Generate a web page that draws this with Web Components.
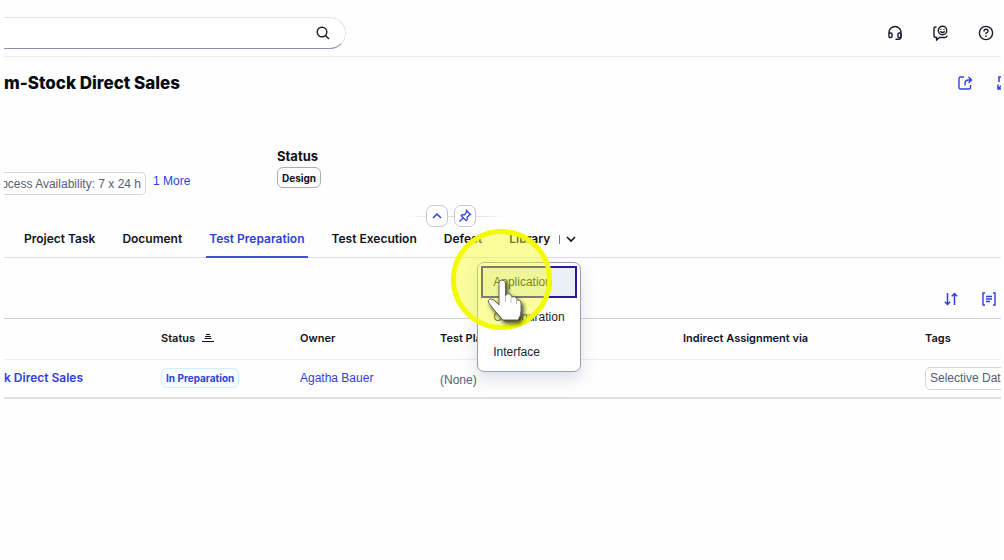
<!DOCTYPE html>
<html lang="en">
<head>
<meta charset="utf-8">
<title>Stock Direct Sales</title>
<style>
html { background: #fff; }
body { margin: 0 3px 0 4px; position: relative; min-height: 100vh; background: #fefefe; color: #131e29; font: 12px/16px "Liberation Sans", sans-serif; font-variant-ligatures: none;
  --link: #2f3fdb; --ink: #10131c; --muted: #556074; --bold: Inter, sans-serif; }
main { overflow-x: clip; }
</style>
</head>
<body>
<shell-bar></shell-bar>
<main>
  <page-header>
    <span slot="title">m-Stock Direct Sales</span>
    <tag-chip slot="facet" cut>ocess Availability: 7 x 24 h</tag-chip>
  </page-header>
  <tab-strip></tab-strip>
  <table-toolbar></table-toolbar>
  <plan-table></plan-table>
</main>
<click-highlight></click-highlight>
<script>
const define = (name, html) => customElements.define(name, class extends HTMLElement {
  constructor() {
    super();
    this.attachShadow({ mode: 'open' }).innerHTML = `<style>
      * { box-sizing: border-box; }
      button { font: inherit; color: inherit; background: none; border: 0; padding: 0; margin: 0; display: flex; align-items: center; justify-content: center; }
      a { color: var(--link); text-decoration: none; }
      svg { display: block; fill: none; stroke: currentColor; flex: none; }
    </style>` + html;
  }
});

define('tag-chip', `<style>
  :host { display: inline-flex; align-items: center; height: 23px; padding: 0 4px; border: 1px solid #d3d5dc; border-radius: 5px; background: #fff; color: var(--muted); white-space: nowrap; box-sizing: border-box; }
  :host([cut]) { border-left: 0; border-radius: 0 5px 5px 0; padding-left: 0; justify-content: flex-end; }
</style><slot></slot>`);

define('shell-bar', `<style>
  :host { display: flex; align-items: center; justify-content: space-between; height: 57px; padding: 10px 7px 0 0; border-bottom: 1px solid #ececf0; box-sizing: border-box; color: #1b1d2c; }
  form { display: flex; align-items: center; width: 342px; height: 32px; border: 1px solid #dfe0ea; border-left: 0; border-bottom-color: #8d91a5; border-radius: 0 16px 16px 0; background: #fff; padding-right: 15px; }
  input { flex: 1; min-width: 0; border: 0; background: none; outline: 0; font: inherit; }
  nav { display: flex; gap: 29px; }
</style>
<form role="search"><input type="text" aria-label="Search"><button type="button" aria-label="Run search">
  <svg width="14" height="14" viewBox="0 0 14 14" stroke-width="1.4"><circle cx="6" cy="6" r="4.8"/><path d="M9.5 9.5 13 13"/></svg></button></form>
<nav>
  <button aria-label="Support"><svg width="16" height="16" viewBox="0 0 16 16" stroke-width="1.4"><path d="M2 9V7.500a6 6 0 0 1 12 0v4.500q0 2.300-2.500 2.300H8.500"/><rect x="2" y="8" width="3" height="4.500" rx="1"/><rect x="11" y="8" width="3" height="4.500" rx="1"/></svg></button>
  <button aria-label="Feedback"><svg width="17" height="16" viewBox="0 0 17 16" stroke-width="1.4"><path d="M4.500 2H3.500Q2 2 2 3.500v7q0 2 2 2h.6V15l3-2.500H13q1.800 0 2.200-1.800"/><circle cx="10.500" cy="5.500" r="4.200"/><path d="M8.300 6.200q2.200 2.600 4.400 0M8.900 4.200v.7M12.100 4.200v.7"/></svg></button>
  <button aria-label="Help"><svg width="16" height="16" viewBox="0 0 16 16" stroke-width="1.4"><circle cx="8" cy="8" r="6.600"/><path d="M6 6.400q0-2.100 2-2.100t2 1.900Q10 7.400 8 8.100v1.200M8 10.500v1.400"/></svg></button>
</nav>`);

define('page-header', `<style>
  :host { display: block; height: 159px; position: relative; }
  header { display: flex; justify-content: space-between; padding: 14px 0 0; height: 90px; }
  h1 { margin: 0; font: 800 17px/24px var(--bold); color: #060a14; white-space: nowrap; }
  .tools { display: flex; gap: 23px; height: 24px; align-items: center; color: var(--link); margin-right: -11px; }
  .facets { display: flex; align-items: flex-start; }
  .more { margin: 26px 0 0 8px; width: 124px; }
  .status h2 { margin: 0; font: 700 13px/18px var(--bold); color: var(--ink); }
  .status span { display: inline-flex; align-items: center; height: 21px; margin-top: 2px; padding: 0 4px; border: 1px solid #a9adb9; border-radius: 6px; font: 700 10px/16px var(--bold); color: var(--ink); }
  slot[name=facet] { display: flex; padding-top: 25px; width: 141px; }
  ::slotted(tag-chip) { width: 142px; flex: none; }
  .pins { position: absolute; left: 404px; top: 148px; width: 96px; padding-left: 18px; display: flex; gap: 6px; color: var(--link); z-index: 1; }
  .pins::before { content: ""; position: absolute; inset: 11px 0 auto; height: 1px; background: linear-gradient(90deg, transparent, #dddde8 30%, #dddde8 70%, transparent); }
  .pins button { position: relative; width: 22px; height: 22px; border: 1px solid #c5c8d9; border-radius: 7px; background: #fff; }
</style>
<header><h1><slot name="title"></slot></h1><div class="tools">
  <button aria-label="Share"><svg width="16" height="16" viewBox="0 0 16 16" stroke-width="1.4"><path d="M7 2H3.500Q2 2 2 3.500v9Q2 14 3.500 14H12q1.500 0 1.500-1.500V10M8 10.500V8.500Q8 5 11.500 5H14M11.500 2l3 3-3 3"/></svg></button>
  <button aria-label="Full screen"><svg width="16" height="16" viewBox="0 0 16 16" stroke-width="1.500"><path d="M3 7V2h5M2 9.500V14h5M2 14l5-5M14 8V2H9"/></svg></button>
</div></header>
<div class="facets"><slot name="facet"></slot><a class="more" href="#">1 More</a><div class="status"><h2>Status</h2><span>Design</span></div></div>
<div class="pins">
  <button aria-label="Collapse header"><svg width="12" height="12" viewBox="0 0 12 12" stroke-width="1.500"><path d="m2 8 4-4 4 4"/></svg></button>
  <button aria-label="Pin header"><svg width="14" height="14" viewBox="0 0 14 14" stroke-width="1.300"><path d="m8.500 1.500 4 4-1.200.5-2.200 2.300.1 2.400-1 1-5-5 1-1 2.400.1L8.500 3.200zM5.500 8.500 1.500 12.500"/></svg></button>
</div>`);

define('tab-strip', `<style>
  :host { display: flex; position: relative; height: 42px; padding: 10px 0 0 17px; border-bottom: 1px solid #e0dfe6; box-sizing: border-box; font: 600 12px/16px var(--bold); color: var(--ink); white-space: nowrap; gap: 24px; }
  nav { display: flex; gap: 21px; }
  nav a { color: inherit; padding: 5px 3px 0; height: 32px; border-bottom: 2px solid transparent; }
  nav a[aria-current] { color: var(--link); border-color: #4650e0; }
  .library { display: flex; height: 26px; padding-top: 5px; position: relative; }
  .library i { width: 1px; height: 9px; margin: 4px 5px 0 9px; background: #777a88; }
  .library button { height: 16px; width: 12px; }
  option-menu { position: absolute; right: -4px; top: 36px; z-index: 2; }
</style>
<nav><a href="#">Project Task</a><a href="#">Document</a><a href="#" aria-current="page">Test Preparation</a><a href="#">Test Execution</a><a href="#">Defect</a></nav>
<div class="library"><span>Library</span><i></i><button aria-label="Open library menu"><svg width="12" height="12" viewBox="0 0 12 12" stroke-width="1.600"><path d="m2 4 4 4 4-4"/></svg></button>
<option-menu></option-menu></div>`);

define('option-menu', `<style>
  :host { display: flex; flex-direction: column; gap: 3px; width: 104px; padding: 3px; border: 1px solid #9a9dab; border-radius: 7px; background: #fff; box-shadow: 0 7px 16px rgba(50,60,110,.16); box-sizing: border-box; font: 12px/16px "Liberation Sans", sans-serif; color: #20242e; }
  button { height: 32px; justify-content: flex-start; padding: 0 10px; border: 2px solid transparent; }
  button:first-of-type { border-color: #2c15a0; background: #eaf0f7; }
</style><button>Application</button><button>Configuration</button><button>Interface</button>`);

define('table-toolbar', `<style>
  :host { display: flex; justify-content: flex-end; align-items: center; gap: 22px; height: 60px; padding: 21px 4px 0 0; color: var(--link); box-sizing: border-box; }
</style>
<button aria-label="Sort"><svg width="16" height="16" viewBox="0 0 16 16" stroke-width="1.500"><path d="M4.500 2v11.500M1.800 10.800l2.700 2.700 2.700-2.700M11.500 14V2.500M8.800 5.200l2.700-2.700 2.700 2.700"/></svg></button>
<button aria-label="Group"><svg width="16" height="16" viewBox="0 0 16 16" stroke-width="1.400"><path d="M4 2H2v12h2M12 2h2v12h-2M5 5.500h6M5 8h6M5 10.500h4"/></svg></button>`);

define('plan-table', `<style>
  :host { display: block; overflow: hidden; }
  table { width: 100%; table-layout: fixed; border-collapse: collapse; border-top: 1px solid #d2d2d7; border-bottom: 2px solid #dedee2; }
  th, td { padding: 0; text-align: left; white-space: nowrap; vertical-align: middle; overflow: hidden; }
  th { height: 41px; padding-bottom: 2px; font: 600 11px/16px var(--bold); color: var(--ink); border-bottom: 1px solid #ececf2; }
  td { height: 38px; color: var(--muted); }
  .sort { display: flex; gap: 7px; align-items: center; }
  .name { font: 600 12px/16px var(--bold); }
  .state { display: inline-flex; align-items: center; height: 20px; padding: 0 4px; border: 1px solid #d5ecfc; border-radius: 6px; background: #f5fdff; color: var(--link); font: 700 10px/16px var(--bold); }
  .none { padding-top: 4px; }
  tag-chip { width: 100px; vertical-align: middle; }
</style>
<table>
  <colgroup><col style="width:157px"><col style="width:139px"><col style="width:140px"><col style="width:243px"><col style="width:242px"><col></colgroup>
  <thead><tr><th></th><th><span class="sort">Status <svg width="12" height="10" viewBox="0 0 12 10" stroke-width="1.200"><path d="M4 1.500h4M2.500 5.500h7M0 8.500h12M3 3.500h6"/></svg></span></th><th>Owner</th><th>Test Plan</th><th>Indirect Assignment via</th><th>Tags</th></tr></thead>
  <tbody><tr><td class="name"><a href="#">k Direct Sales</a></td><td><span class="state">In Preparation</span></td><td><a href="#">Agatha Bauer</a></td><td class="none">(None)</td><td></td><td><tag-chip>Selective Dat</tag-chip></td></tr></tbody>
</table>`);

define('click-highlight', `<style>
  :host { display: block; position: absolute; left: 447px; top: 229px; width: 101px; height: 101px; border: 5px solid #f2fb00; border-radius: 50%; background: rgba(243,253,30,.44); box-sizing: border-box; z-index: 5; pointer-events: none; }
  svg { position: absolute; left: 29px; top: 44px; filter: drop-shadow(2px 3px 2px rgba(0,0,0,.75)); stroke: none; }
</style>
<svg width="42" height="50" viewBox="0 0 42 50"><path fill="#fff" stroke="#66665a" stroke-width="1" d="M14 5q0-3 3-3t3.500 3v13l1-2q3-1 4.500 1l1 2q3-1 4.500 1l.8 2q3.700-.5 3.700 3v8q0 5-3 9H18q-3-4-8-9l-6-8q-2-3 1-4 3-.5 6 3l3 3z"/><path d="M20.500 18v6M26 19v6M31.500 21v5" stroke="#bbb"/></svg>`);
</script>
</body>
</html>
